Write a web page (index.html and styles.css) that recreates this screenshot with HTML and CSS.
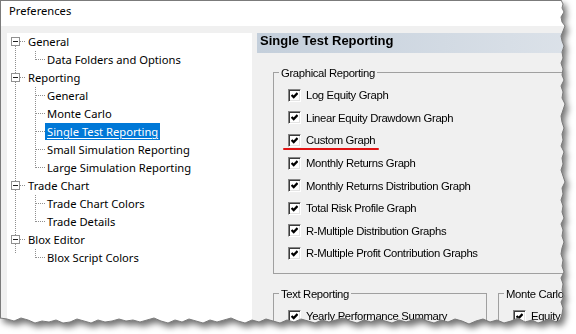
FILE: index.html
```html
<!DOCTYPE html>
<html lang="en">
    <head>
        <title>Preferences</title>
        <meta charset="utf-8">
        <link rel="stylesheet" href="styles.css">
    </head>
    <body>
        <div class="shot">
            <div class="window">
                <div class="titlebar">Preferences</div>
                <div class="main">
                    <div class="tree-panel">
                        <ul class="tree">
                            <li>
                                <div class="row"><span class="toggle"></span><span class="dots"></span><span class="label">General</span></div>
                                <ul class="children">
                                    <li class="leaf"><span class="dots"></span><span class="label">Data Folders and Options</span></li>
                                </ul>
                            </li>
                            <li>
                                <div class="row"><span class="toggle"></span><span class="dots"></span><span class="label">Reporting</span></div>
                                <ul class="children">
                                    <li class="leaf"><span class="dots"></span><span class="label">General</span></li>
                                    <li class="leaf"><span class="dots"></span><span class="label">Monte Carlo</span></li>
                                    <li class="leaf"><span class="dots"></span><span class="label selected">Single Test Reporting</span></li>
                                    <li class="leaf"><span class="dots"></span><span class="label">Small Simulation Reporting</span></li>
                                    <li class="leaf"><span class="dots"></span><span class="label">Large Simulation Reporting</span></li>
                                </ul>
                            </li>
                            <li>
                                <div class="row"><span class="toggle"></span><span class="dots"></span><span class="label">Trade Chart</span></div>
                                <ul class="children">
                                    <li class="leaf"><span class="dots"></span><span class="label">Trade Chart Colors</span></li>
                                    <li class="leaf"><span class="dots"></span><span class="label">Trade Details</span></li>
                                </ul>
                            </li>
                            <li>
                                <div class="row"><span class="toggle"></span><span class="dots"></span><span class="label">Blox Editor</span></div>
                                <ul class="children">
                                    <li class="leaf"><span class="dots"></span><span class="label">Blox Script Colors</span></li>
                                </ul>
                            </li>
                        </ul>
                    </div>
                    <div class="pane">
                        <div class="pane-header">Single Test Reporting</div>

                        <div class="group graphical">
                            <div class="group-title">Graphical Reporting</div>
                            <ul class="checks">
                                <li class="check"><span class="box"><svg width="7" height="7" viewBox="0 0 7 7"><path d="M0.6 3 2.7 5.1 6.5 1.1" /></svg></span>Log Equity Graph</li>
                                <li class="check"><span class="box"><svg width="7" height="7" viewBox="0 0 7 7"><path d="M0.6 3 2.7 5.1 6.5 1.1" /></svg></span>Linear Equity Drawdown Graph</li>
                                <li class="check"><span class="box"><svg width="7" height="7" viewBox="0 0 7 7"><path d="M0.6 3 2.7 5.1 6.5 1.1" /></svg></span>Custom Graph<span class="mark"></span></li>
                                <li class="check"><span class="box"><svg width="7" height="7" viewBox="0 0 7 7"><path d="M0.6 3 2.7 5.1 6.5 1.1" /></svg></span>Monthly Returns Graph</li>
                                <li class="check"><span class="box"><svg width="7" height="7" viewBox="0 0 7 7"><path d="M0.6 3 2.7 5.1 6.5 1.1" /></svg></span>Monthly Returns Distribution Graph</li>
                                <li class="check"><span class="box"><svg width="7" height="7" viewBox="0 0 7 7"><path d="M0.6 3 2.7 5.1 6.5 1.1" /></svg></span>Total Risk Profile Graph</li>
                                <li class="check"><span class="box"><svg width="7" height="7" viewBox="0 0 7 7"><path d="M0.6 3 2.7 5.1 6.5 1.1" /></svg></span>R-Multiple Distribution Graphs</li>
                                <li class="check"><span class="box"><svg width="7" height="7" viewBox="0 0 7 7"><path d="M0.6 3 2.7 5.1 6.5 1.1" /></svg></span>R-Multiple Profit Contribution Graphs</li>
                            </ul>
                        </div>

                        <div class="group-row">
                            <div class="group text-rep">
                                <div class="group-title">Text Reporting</div>
                                <ul class="checks">
                                    <li class="check"><span class="box"><svg width="7" height="7" viewBox="0 0 7 7"><path d="M0.6 3 2.7 5.1 6.5 1.1" /></svg></span>Yearly Performance Summary</li>
                                </ul>
                            </div>
                            <div class="group monte">
                                <div class="group-title">Monte Carlo</div>
                                <ul class="checks">
                                    <li class="check"><span class="box"><svg width="7" height="7" viewBox="0 0 7 7"><path d="M0.6 3 2.7 5.1 6.5 1.1" /></svg></span>Equity</li>
                                </ul>
                            </div>
                        </div>
                    </div>
                </div>
            </div>
            <!-- torn edge outline -->
            <svg class="tear" width="576" height="334">
                <polyline fill="none" stroke="#7a7a7a" stroke-width="1" points="561,0 563,4 562,8 564,12 561,17 562,22 565,26 563,31 561,36 562,41 564,46 562,52 563,58 561,63 563,69 562,75 564,80 561,86 563,92 562,98 565,104 563,110 561,116 562,122 564,128 562,134 563,140 561,146 564,152 562,158 563,164 561,170 563,176 565,182 562,188 563,194 561,200 563,206 562,212 564,218 561,224 563,230 562,236 564,242 562,248 561,254 563,260 562,266 564,272 561,278 563,284 562,290 564,296 561,302 563,308 562,314 560,320 556,322 550,319 544,321 538,323 532,320 525,322 518,318 511,321 504,323 497,320 490,322 483,319 476,321 469,324 462,321 455,319 448,322 441,320 434,323 427,321 420,318 413,320 406,322 399,320 392,323 385,321 378,319 371,322 364,320 357,323 350,321 343,318 336,320 329,322 322,320 315,323 308,321 301,319 294,322 287,320 280,323 273,321 266,319 259,322 252,320 245,323 238,321 231,318 224,320 217,322 210,320 203,323 196,321 189,319 182,322 175,320 168,323 161,321 154,318 147,320 140,322 133,320 126,321 119,319 112,321 105,322 98,320 91,323 84,321 77,319 70,322 63,323 56,320 49,322 42,321 35,323 28,320 21,318 14,321 7,319 0,318" />
            </svg>
        </div>
    </body>
</html>
```

FILE: styles.css
```css
body{
margin: 0;
background: #fff;
}
.shot{
position: relative;
width: 576px;
height: 334px;
filter: drop-shadow(3px 4px 3px rgba(0,0,0,0.55));
}
.window{
box-sizing: border-box;
height: 334px;
display: flex;
flex-direction: column;
background: #f0f0f0;
border-top: 1px solid #7b7b7b;
border-left: 1px solid #7b7b7b;
clip-path: polygon(0 0, 561px 0, 563px 4px, 562px 8px, 564px 12px, 561px 17px, 562px 22px, 565px 26px, 563px 31px, 561px 36px, 562px 41px, 564px 46px, 562px 52px, 563px 58px, 561px 63px, 563px 69px, 562px 75px, 564px 80px, 561px 86px, 563px 92px, 562px 98px, 565px 104px, 563px 110px, 561px 116px, 562px 122px, 564px 128px, 562px 134px, 563px 140px, 561px 146px, 564px 152px, 562px 158px, 563px 164px, 561px 170px, 563px 176px, 565px 182px, 562px 188px, 563px 194px, 561px 200px, 563px 206px, 562px 212px, 564px 218px, 561px 224px, 563px 230px, 562px 236px, 564px 242px, 562px 248px, 561px 254px, 563px 260px, 562px 266px, 564px 272px, 561px 278px, 563px 284px, 562px 290px, 564px 296px, 561px 302px, 563px 308px, 562px 314px, 560px 320px, 556px 322px, 550px 319px, 544px 321px, 538px 323px, 532px 320px, 525px 322px, 518px 318px, 511px 321px, 504px 323px, 497px 320px, 490px 322px, 483px 319px, 476px 321px, 469px 324px, 462px 321px, 455px 319px, 448px 322px, 441px 320px, 434px 323px, 427px 321px, 420px 318px, 413px 320px, 406px 322px, 399px 320px, 392px 323px, 385px 321px, 378px 319px, 371px 322px, 364px 320px, 357px 323px, 350px 321px, 343px 318px, 336px 320px, 329px 322px, 322px 320px, 315px 323px, 308px 321px, 301px 319px, 294px 322px, 287px 320px, 280px 323px, 273px 321px, 266px 319px, 259px 322px, 252px 320px, 245px 323px, 238px 321px, 231px 318px, 224px 320px, 217px 322px, 210px 320px, 203px 323px, 196px 321px, 189px 319px, 182px 322px, 175px 320px, 168px 323px, 161px 321px, 154px 318px, 147px 320px, 140px 322px, 133px 320px, 126px 321px, 119px 319px, 112px 321px, 105px 322px, 98px 320px, 91px 323px, 84px 321px, 77px 319px, 70px 322px, 63px 323px, 56px 320px, 49px 322px, 42px 321px, 35px 323px, 28px 320px, 21px 318px, 14px 321px, 7px 319px, 0 318px);
}
.tear{
position: absolute;
top: 0;
left: 0;
}
.titlebar{
height: 25px;
flex: none;
padding-left: 8px;
background: #fff;
font: 11.2px "Noto Sans", sans-serif;
line-height: 20px;
color: #000;
}
.main{
flex: 1;
min-height: 0;
display: flex;
padding: 7px 0 0 6px;
}

/* tree */
.tree-panel{
width: 245px;
flex: none;
background: #fff;
font: 11.2px "Noto Sans", sans-serif;
color: #000;
}
.tree, .children{
list-style: none;
margin: 0;
padding: 0;
}
.tree{
background-image: repeating-linear-gradient(to bottom, #8f8f8f 0 1px, transparent 1px 2px);
background-size: 1px calc(100% - 27px);
background-position: 8px 13px;
background-repeat: no-repeat;
}
.children{
background-image: repeating-linear-gradient(to bottom, #8f8f8f 0 1px, transparent 1px 2px);
background-size: 1px calc(100% - 8px);
background-position: 28px 0;
background-repeat: no-repeat;
}
.row, .leaf{
height: 18px;
display: flex;
align-items: flex-start;
}
.leaf{
padding-left: 29px;
}
.toggle{
box-sizing: border-box;
width: 9px;
height: 9px;
margin: 4px 0 0 4px;
border: 1px solid #919191;
background: #fff;
display: flex;
align-items: center;
justify-content: center;
}
.toggle::before{
content: "";
width: 5px;
height: 1px;
background: #1e1e1e;
}
.dots{
height: 1px;
margin-top: 8px;
width: 9px;
background: repeating-linear-gradient(to right, #8f8f8f 0 1px, transparent 1px 2px);
}
.row .dots{
width: 6px;
}
.label{
padding: 0 2px;
line-height: 17px;
white-space: nowrap;
}
.selected{
background: #0078d7;
color: #fff;
text-decoration: underline;
text-underline-offset: 2px;
}

/* right pane */
.pane{
flex: 1;
min-width: 0;
padding-left: 5px;
overflow: hidden;
font: 11.3px "Liberation Sans", Arial, sans-serif;
letter-spacing: -0.35px;
color: #000;
}
.pane-header{
height: 20px;
line-height: 20px;
padding-left: 3px;
font: bold 13px "Liberation Sans", Arial, sans-serif;
letter-spacing: 0;
background: linear-gradient(to right, #c4cfdb, #dce2e9);
}
.group{
border: 1px solid #a0a0a0;
padding: 0 0 8px 14px;
}
.graphical{
margin: 19px 0 0 16px;
}
.group-row{
display: flex;
gap: 11px;
margin: 19px 0 0 16px;
}
.text-rep{
box-sizing: border-box;
width: 214px;
flex: none;
}
.monte{
flex: 1;
}
.group-title{
width: fit-content;
margin: -6px 0 0 -9px;
padding: 0 2px;
line-height: 13px;
background: #f0f0f0;
white-space: nowrap;
}
.checks{
list-style: none;
margin: 4px 0 0 0;
padding: 0;
}
.check{
position: relative;
height: 22.6px;
display: flex;
align-items: center;
white-space: nowrap;
}
.box{
width: 11px;
height: 11px;
flex: none;
margin-right: 5px;
border: 1px solid;
border-color: #858585 #fff #fff #858585;
box-shadow: inset 1px 1px #3c3c3c, inset -1px -1px #e3e3e3;
background: #fff;
display: flex;
align-items: center;
justify-content: center;
}
.box path{
fill: none;
stroke: #000;
stroke-width: 2.2;
}
.mark{
position: absolute;
left: -5px;
top: 19px;
width: 96px;
height: 2px;
border-radius: 1px;
background: #e01414;
}
```
